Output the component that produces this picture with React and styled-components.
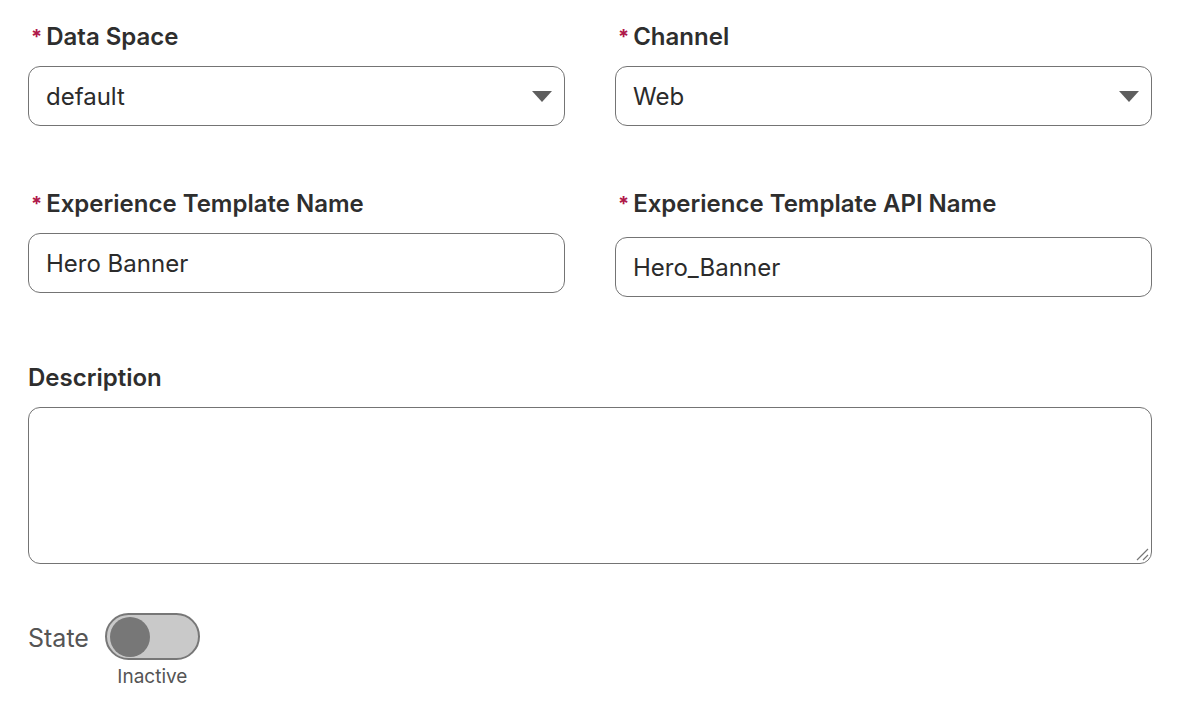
import React from "react";
import styled, { createGlobalStyle } from "styled-components";

const Global = createGlobalStyle`
  body { margin: 0; background: #fff; font-family: "Inter", "Liberation Sans", sans-serif; color: #2b2b2b; }
`;
const Page = styled.div`padding: 20px 32px 0 28px; width: 1124px;`;
const Row = styled.div`display: grid; grid-template-columns: 537px 537px; column-gap: 50px; margin-bottom: ${p => p.$mb}px;`;
const Field = styled.div`display: flex; flex-direction: column;`;
const Label = styled.div`font-size: 24px; font-weight: 600; color: #2e2e2e; height: 34px; line-height: 34px; margin-bottom: 12px; display: flex; align-items: center;`;
const Star = styled.span`color: #b0184a; font-size: 20px; margin: 0 4px 0 3px; font-weight: 700;`;
const Box = styled.div`
  height: 58px; border: 1.5px solid #747474; border-radius: 12px; display: flex; align-items: center;
  justify-content: space-between; padding: 0 12px 0 17px; font-size: 24px; color: #2b2b2b;
  margin-top: ${p => p.$mt || 0}px;
`;
const Area = styled.div`height: 155px; border: 1.5px solid #747474; border-radius: 12px; position: relative;`;
const Grip = styled.svg`position: absolute; right: 2px; bottom: 2px;`;
const StateRow = styled.div`display: flex; align-items: flex-start; gap: 16px; margin-top: 49px;`;
const StateLabel = styled.div`font-size: 25px; color: #555; margin-top: 10px;`;
const SwitchCol = styled.div`display: flex; flex-direction: column; align-items: center;`;
const Switch = styled.div`
  width: 95px; height: 47px; border-radius: 24px; background: #c9c9c9; border: 2px solid #777;
  display: flex; align-items: center; padding-left: 3px; box-sizing: border-box;
`;
const Knob = styled.div`width: 40px; height: 40px; border-radius: 50%; background: #777;`;
const Small = styled.div`font-size: 19px; color: #555; margin-top: 5px;`;

const Caret = () => (
  <svg width="20" height="14" viewBox="0 0 20 14"><path d="M0 2 H20 L10 13 Z" fill="#5e5e5e" /></svg>
);

export default function App() {
  return (
    <Page>
      <Global />
      <Row $mb={61}>
        <Field><Label><Star>*</Star>Data Space</Label><Box>default<Caret /></Box></Field>
        <Field><Label><Star>*</Star>Channel</Label><Box>Web<Caret /></Box></Field>
      </Row>
      <Row $mb={64}>
        <Field><Label><Star>*</Star>Experience Template Name</Label><Box>Hero Banner</Box></Field>
        <Field><Label><Star>*</Star>Experience Template API Name</Label><Box $mt={4}>Hero_Banner</Box></Field>
      </Row>
      <Field>
        <Label>Description</Label>
        <Area>
          <Grip width="16" height="16" viewBox="0 0 16 16">
            <path d="M15 4 L4 15 M15 10 L10 15" stroke="#777" strokeWidth="1.2" />
          </Grip>
        </Area>
      </Field>
      <StateRow>
        <StateLabel>State</StateLabel>
        <SwitchCol>
          <Switch><Knob /></Switch>
          <Small>Inactive</Small>
        </SwitchCol>
      </StateRow>
    </Page>
  );
}
